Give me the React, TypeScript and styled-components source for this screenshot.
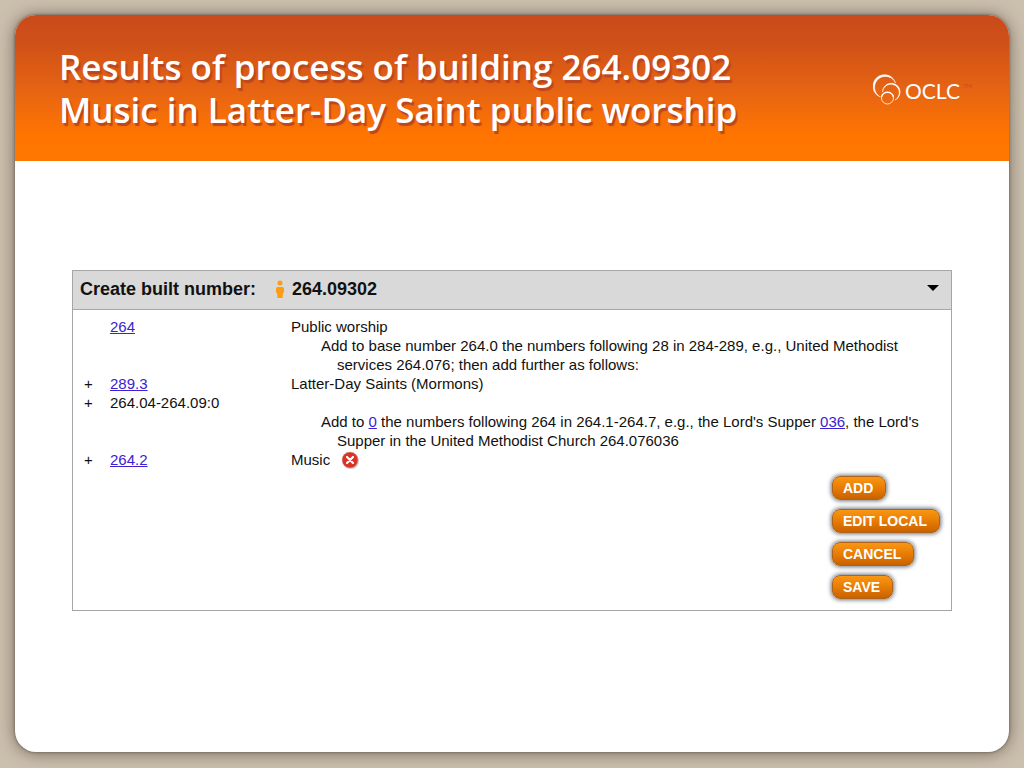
import React from "react";
import styled, { createGlobalStyle } from "styled-components";

const GlobalStyle = createGlobalStyle`
  * { box-sizing: border-box; }
  body {
    margin: 0;
    background: #cbbfae;
    font-family: "Liberation Sans", Arial, sans-serif;
    color: #111;
  }
`;

const Page = styled.div`
  min-height: 100vh;
  padding: 15px 15px 16px;
  display: flex;
`;

const Slide = styled.main`
  flex: 1;
  min-width: 0;
  border-radius: 21px;
  background: #fff;
  overflow: hidden;
  box-shadow: 0 0 3px #5f5547, 0 1px 17px #75695a;
`;

const Banner = styled.header`
  display: flex;
  align-items: center;
  justify-content: space-between;
  min-height: 146px;
  padding: 0 36px 0 44px;
  background: linear-gradient(#c94a1b 0%, #cf5118 20%, #e96612 55%, #ff7500 82%, #ff7700 100%);
`;

const Title = styled.h1`
  margin: 0;
  font: 600 35px/43px "Open Sans", "Trebuchet MS", sans-serif;
  color: #fff;
  text-shadow: 2px 3px 1px #bb4620;
`;

const Line = styled.span`
  display: block;
`;

const Logo = styled.svg`
  flex: none;
  width: 100px;
  height: 34px;
`;

const Panel = styled.section`
  margin: 109px 57px 0;
  border: 1px solid #a6a6a6;
`;

const PanelHeader = styled.div`
  display: flex;
  align-items: center;
  height: 39px;
  padding: 0 12px 2px 7px;
  background: #d9d9d9;
  border-bottom: 1px solid #a6a6a6;
`;

const PanelTitle = styled.h2`
  margin: 0;
  font-size: 18px;
  line-height: 20px;
  font-weight: 700;
`;

const PersonIcon = styled.svg`
  width: 10px;
  height: 20px;
  margin: 0 7px 0 19px;
`;

const Toggle = styled.button`
  margin-left: auto;
  padding: 0;
  border: 0;
  background: none;
  width: 12px;
  height: 12px;
  svg { display: block; }
`;

const Numbers = styled.table`
  width: 100%;
  margin-top: 7px;
  border-collapse: collapse;
  font-size: 15px;
  line-height: 19px;
`;

const Cell = styled.td<{ $width?: number; $indent?: number }>`
  width: ${(p) => (p.$width ? `${p.$width}px` : "auto")};
  padding: 0 0 0 ${(p) => p.$indent ?? 0}px;
  vertical-align: top;
  white-space: nowrap;
`;

const Link = styled.a`
  color: #3a22d2;
  text-decoration: underline;
`;

const Note = styled.p`
  margin: 0;
  padding-left: 46px;
`;

const NoteLine = styled.span<{ $first?: boolean }>`
  display: block;
  text-indent: ${(p) => (p.$first ? "-16px" : "0")};
`;

const Remove = styled.button`
  margin: 0 0 0 10px;
  padding: 0;
  border: 0;
  background: none;
  width: 20px;
  height: 19px;
  vertical-align: top;
  svg { display: block; }
`;

const Actions = styled.div`
  display: flex;
  flex-direction: column;
  align-items: flex-start;
  gap: 9px;
  width: 119px;
  margin: 7px 0 11px auto;
`;

const Action = styled.button`
  height: 24px;
  padding: 0 12px 0 10px;
  border: 1px solid #ae631a;
  border-radius: 8px;
  background: linear-gradient(#f99713, #e87c05 50%, #c86200);
  box-shadow: 0 0 4px 1px #6c737c;
  color: #fff;
  font: 700 14px/20px "Liberation Sans", Arial, sans-serif;
`;

export default function App() {
  return (
    <>
      <GlobalStyle />
      <Page>
        <Slide>
          <Banner>
            <Title>
              <Line>Results of process of building 264.09302</Line>
              <Line>Music in Latter-Day Saint public worship</Line>
            </Title>
            <Logo viewBox="0 0 100 34" role="img" aria-label="OCLC">
              <g fill="#fff" stroke="#fff" strokeWidth="0.5" strokeLinejoin="round">
                <path d="M7.500 26 A11.500 11.500 0 1 1 22.500 12 A10.900 10.900 0 1 0 7.500 26z" />
                <path d="M9.500 21 A8.800 8.800 0 1 1 22 29 A8.400 8.400 0 1 0 9.500 21z" />
              </g>
              <circle cx="14.500" cy="27" r="6" fill="none" stroke="#fff" strokeWidth="0.8" />
              <path d="M8.500 26 A6.200 6.200 0 0 1 20.500 26" fill="none" stroke="#fff" strokeWidth="1.200" />
              <text x="32" y="28" fill="#fff" fontFamily="Lato, sans-serif" fontSize="21">OCLC</text>
              <text x="90" y="17" fill="#b95524" fontFamily="Lato, sans-serif" fontSize="6">TM</text>
            </Logo>
          </Banner>

          <Panel>
            <PanelHeader>
              <PanelTitle>Create built number:</PanelTitle>
              <PersonIcon viewBox="0 0 10 20" aria-hidden="true">
                <g fill="#ff9c12">
                  <circle cx="5" cy="4" r="2.500" />
                  <path d="M2.500 8h5q1.500 0 1.500 1.500v3q0 1.500-1.200 2v3q0 1.500-1.300 1.500h-3q-1.300 0-1.300-1.500v-3q-1.200-.5-1.200-2v-3q0-1.500 1.500-1.500z" />
                </g>
              </PersonIcon>
              <PanelTitle as="span">264.09302</PanelTitle>
              <Toggle aria-label="Collapse">
                <svg width="12" height="12" viewBox="0 0 12 12"><path d="M0 2h12L6 8z" fill="#000" /></svg>
              </Toggle>
            </PanelHeader>

            <Numbers>
              <tbody>
                <tr>
                  <Cell $width={37} />
                  <Cell $width={181}><Link href="#264">264</Link></Cell>
                  <Cell>
                    Public worship
                    <Note>
                      <NoteLine $first>Add to base number 264.0 the numbers following 28 in 284-289, e.g., United Methodist</NoteLine>
                      <NoteLine>services 264.076; then add further as follows:</NoteLine>
                    </Note>
                  </Cell>
                </tr>
                <tr>
                  <Cell $indent={11}>+</Cell>
                  <Cell><Link href="#289.3">289.3</Link></Cell>
                  <Cell>Latter-Day Saints (Mormons)</Cell>
                </tr>
                <tr>
                  <Cell $indent={11}>+</Cell>
                  <Cell>264.04-264.09:0</Cell>
                  <Cell>
                    <br />
                    <Note>
                      <NoteLine $first>
                        Add to <Link href="#0">0</Link> the numbers following 264 in 264.1-264.7, e.g., the Lord's Supper{" "}
                        <Link href="#036">036</Link>, the Lord's
                      </NoteLine>
                      <NoteLine>Supper in the United Methodist Church 264.076036</NoteLine>
                    </Note>
                  </Cell>
                </tr>
                <tr>
                  <Cell $indent={11}>+</Cell>
                  <Cell><Link href="#264.2">264.2</Link></Cell>
                  <Cell>
                    Music
                    <Remove aria-label="Remove Music">
                      <svg width="20" height="19" viewBox="0 0 20 19">
                        <circle cx="11" cy="11" r="8" fill="#ccc" />
                        <circle cx="10" cy="10" r="8" fill="#dc3226" stroke="#c9b3b3" strokeWidth="0.5" />
                        <path d="M7 7l6 6M13 7l-6 6" stroke="#fff" strokeWidth="2.200" strokeLinecap="round" />
                      </svg>
                    </Remove>
                  </Cell>
                </tr>
              </tbody>
            </Numbers>

            <Actions>
              <Action>ADD</Action>
              <Action>EDIT LOCAL</Action>
              <Action>CANCEL</Action>
              <Action>SAVE</Action>
            </Actions>
          </Panel>
        </Slide>
      </Page>
    </>
  );
}
